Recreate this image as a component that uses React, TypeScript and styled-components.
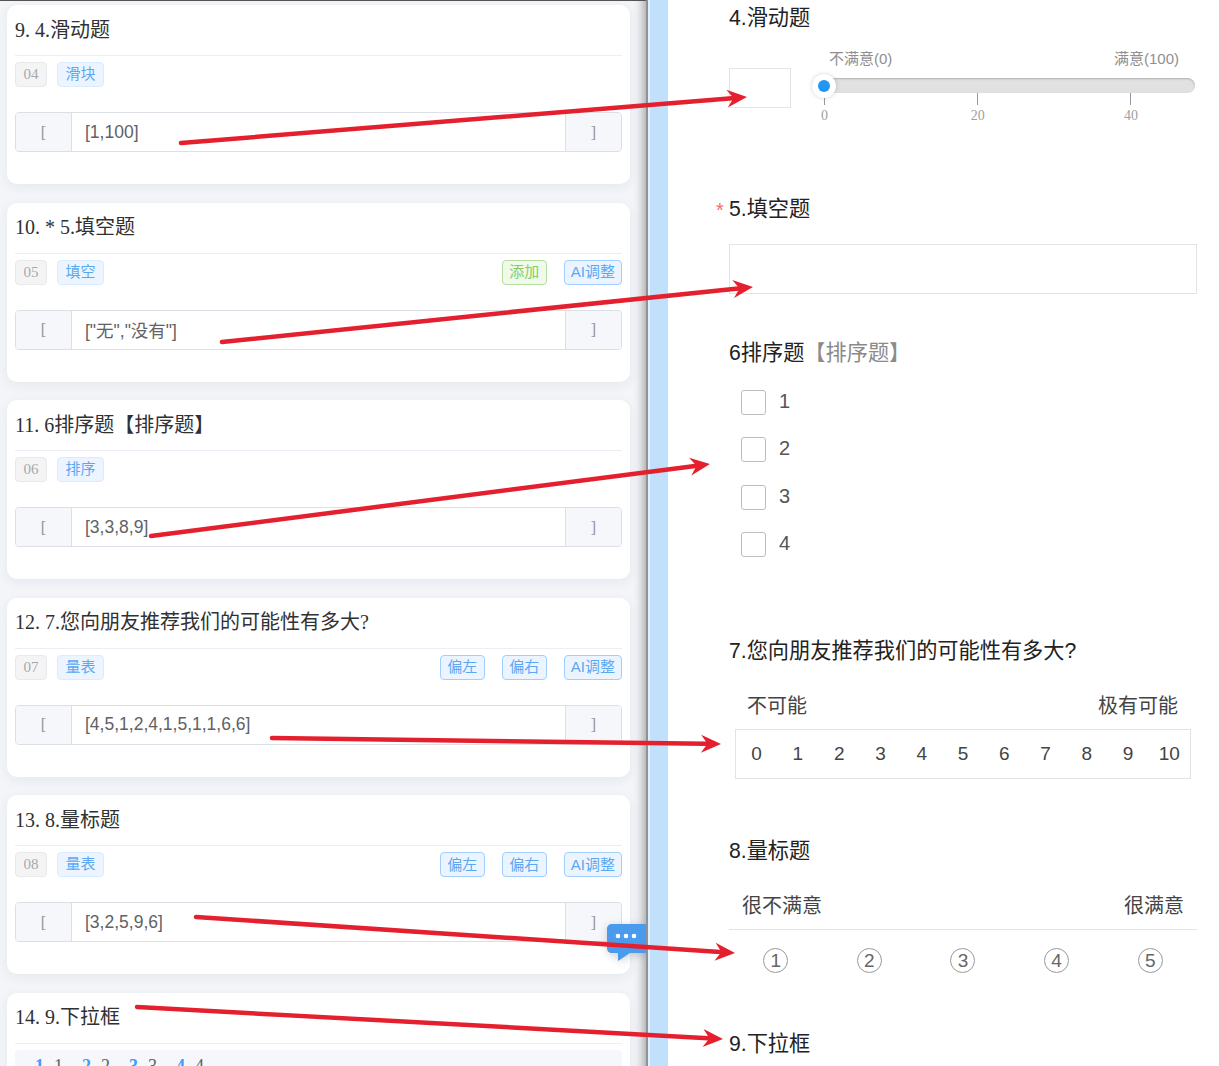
import React from 'react';
import styled, { createGlobalStyle } from 'styled-components';

const GlobalStyle = createGlobalStyle`
  html, body {
    margin: 0;
    padding: 0;
    background: #fff;
  }
  * {
    box-sizing: border-box;
  }
`;

const SERIF = `"Liberation Serif", "Noto Sans CJK SC", serif`;
const SANS = `"Liberation Sans", "Noto Sans CJK SC", sans-serif`;

const Page = styled.div`
  position: relative;
  display: flex;
  width: 1219px;
  height: 1066px;
  overflow: hidden;
`;

/* left editor column */
const EditorPane = styled.div`
  position: relative;
  flex: 0 0 646px;
  height: 100%;
  padding: 5px 16px 0 7px;
  background: #f3f5f8;
  border-top: 1px solid #555;
  overflow: hidden;
  box-shadow: inset -12px 0 10px -9px rgba(0, 0, 0, 0.32);
  font-family: ${SERIF};
`;
const Card = styled.div`
  height: 179px;
  margin-bottom: 18.5px;
  padding: 0 8px;
  background: #fff;
  border-radius: 10px;
  box-shadow: 0 3px 12px rgba(30, 50, 90, 0.07);
  &:first-child {
    margin-top: -1px;
  }
`;
const CardTitle = styled.div`
  height: 51px;
  padding-top: 9.7px;
  border-bottom: 1px solid #ebeef5;
  font-size: 20px;
  line-height: 30px;
  color: #303133;
`;
const TagRow = styled.div`
  display: flex;
  align-items: center;
  gap: 10px;
  height: 25px;
  margin-top: 6px;
`;
const ActionGroup = styled.div`
  display: flex;
  gap: 17px;
  margin-left: auto;
`;
const Tag = styled.span<{ $kind: 'plain' | 'soft' }>`
  display: inline-flex;
  align-items: center;
  justify-content: center;
  height: 25px;
  padding: 0 7.5px ${(p) => (p.$kind === 'plain' ? 0 : 4)}px;
  border-radius: 4px;
  border: 1px solid ${(p) => (p.$kind === 'plain' ? '#e9e9eb' : '#d9ecff')};
  background: ${(p) => (p.$kind === 'plain' ? '#f4f4f5' : '#ecf5ff')};
  color: ${(p) => (p.$kind === 'plain' ? '#a6a9ad' : '#5ba8f2')};
  font-size: 15px;
  white-space: nowrap;
`;
const ActionTag = styled.span<{ $green?: boolean }>`
  display: inline-flex;
  align-items: center;
  justify-content: center;
  min-width: 45px;
  height: 25px;
  padding: 0 6px 3px;
  border-radius: 4px;
  border: 1px solid ${(p) => (p.$green ? '#b3e19d' : '#a0cfff')};
  background: ${(p) => (p.$green ? '#f0f9eb' : '#ecf5ff')};
  color: ${(p) => (p.$green ? '#85ce61' : '#5ba8f2')};
  font-family: ${SANS};
  font-size: 15px;
  white-space: nowrap;
`;
const InputGroup = styled.div`
  display: flex;
  height: 40px;
  margin-top: 25px;
  border: 1px solid #dcdfe6;
  border-radius: 4px;
  overflow: hidden;
`;
const Bracket = styled.div`
  display: flex;
  align-items: center;
  justify-content: center;
  flex: 0 0 55px;
  padding-top: 1px;
  background: #f5f7fa;
  color: #909399;
  font-size: 16px;
`;
const ValueText = styled.div`
  flex: 1;
  display: flex;
  align-items: center;
  padding-left: 13px;
  border-left: 1px solid #dcdfe6;
  border-right: 1px solid #dcdfe6;
  font-family: ${SANS};
  font-size: 17.5px;
  color: #606266;
`;
const OptionStrip = styled.div`
  display: flex;
  gap: 12px;
  height: 40px;
  margin-top: 6px;
  padding: 4px 0 0 20px;
  background: #f5f7fa;
  border-radius: 4px;
  font-size: 18px;
  line-height: 24px;
`;
const OptionItem = styled.span`
  display: inline-flex;
  gap: 10px;
  width: 35px;
  color: #606266;
  b {
    color: #409eff;
  }
`;
const ChatBubble = styled.svg`
  position: absolute;
  right: 0;
  top: 923px;
  filter: drop-shadow(0 2px 4px rgba(0, 0, 0, 0.18));
`;

/* divider between the two columns */
const Divider = styled.div`
  flex: 0 0 22px;
  height: 100%;
  background: linear-gradient(to right, #8d9297 0, #8d9297 2px, #e4f1fd 2px, #e4f1fd 4px, #c1e0fb 4px);
`;

/* right preview column */
const PreviewPane = styled.div`
  flex: 0 0 551px;
  min-width: 0;
  padding: 3px 22px 0 61px;
  background: #fff;
  font-family: ${SANS};
`;
const Question = styled.div<{ $height?: number }>`
  height: ${(p) => (p.$height ? `${p.$height}px` : 'auto')};
`;
const QuestionTitle = styled.div`
  position: relative;
  height: 28px;
  font-size: 21.2px;
  line-height: 30px;
  color: #222;
`;
const RequiredMark = styled.span`
  position: absolute;
  left: -13px;
  top: 1px;
  color: #f56c6c;
  font-size: 20px;
`;
const TitleNote = styled.span`
  color: #8a8a8a;
`;
const SliderRow = styled.div`
  display: flex;
  align-items: flex-start;
`;
const SliderValue = styled.div`
  flex: 0 0 62px;
  height: 40px;
  margin-top: 37px;
  border: 1px solid #e3e3e3;
`;
const SliderArea = styled.div`
  flex: 1;
  min-width: 0;
  margin: 18px 2px 0 21px;
`;
const SliderLabels = styled.div`
  display: flex;
  justify-content: space-between;
  height: 20px;
  padding: 0 16px 0 17px;
  font-size: 15px;
  line-height: 20px;
  color: #8f8f8f;
`;
const SliderTrack = styled.div`
  position: relative;
  height: 15px;
  margin-top: 9px;
  border-radius: 8px;
  background: #e1e1e1;
  box-shadow: inset 0 1px 2px rgba(0, 0, 0, 0.22);
`;
const SliderHandle = styled.div`
  position: absolute;
  left: 0;
  top: -4.5px;
  width: 24px;
  height: 24px;
  border-radius: 50%;
  background: #fff;
  box-shadow: 0 0 4px rgba(0, 0, 0, 0.18);
  &::after {
    content: '';
    position: absolute;
    left: 6px;
    top: 6px;
    width: 12px;
    height: 12px;
    border-radius: 50%;
    background: #2196f3;
  }
`;
const SliderScale = styled.div`
  display: flex;
  gap: 152.2px;
  padding-left: 12px;
`;
const SliderTick = styled.div`
  display: flex;
  flex-direction: column;
  align-items: center;
  flex: 0 0 1px;
  width: 1px;
  min-width: 0;
  font-family: ${SERIF};
  font-size: 14px;
  line-height: 16px;
  color: #a0a0a0;
  &::before {
    content: '';
    flex: 0 0 12px;
    width: 1px;
    margin-bottom: 3px;
    background: #999;
  }
`;
const TextBox = styled.div`
  height: 50px;
  margin-top: 22px;
  border: 1px solid #e3e3e3;
`;
const SortList = styled.div`
  display: flex;
  flex-direction: column;
  gap: 22.4px;
  margin-top: 24px;
  padding-left: 12px;
`;
const SortRow = styled.div`
  display: flex;
  align-items: center;
  gap: 13px;
  height: 25px;
  padding-bottom: 2px;
  font-size: 20px;
  color: #555;
`;
const CheckBox = styled.span`
  flex: 0 0 25px;
  height: 25px;
  margin-bottom: -2px;
  border: 1px solid #bdbdbd;
  border-radius: 3px;
  background: #fff;
`;
const ScaleLabels = styled.div<{ $left: number; $right: number; $ruled?: boolean }>`
  display: flex;
  justify-content: space-between;
  height: ${(p) => (p.$ruled ? 38 : 27)}px;
  margin-top: 28px;
  padding: 0 ${(p) => p.$right}px 0 ${(p) => p.$left}px;
  font-size: 20px;
  line-height: 28px;
  color: #444;
  border-bottom: ${(p) => (p.$ruled ? '1px solid #e3e3e3' : 'none')};
`;
const NpsBox = styled.div`
  display: grid;
  grid-template-columns: repeat(11, 1fr);
  align-items: center;
  height: 50px;
  margin: 10px 6px 0;
  border: 1px solid #e3e3e3;
  font-size: 19px;
  color: #444;
  text-align: center;
`;
const RatingRow = styled.div`
  display: grid;
  grid-template-columns: repeat(5, 1fr);
  justify-items: center;
  margin-top: 18px;
`;
const RatingCircle = styled.span`
  display: flex;
  align-items: center;
  justify-content: center;
  width: 25px;
  height: 25px;
  border: 1px solid #999;
  border-radius: 50%;
  font-size: 19px;
  color: #666;
`;

/* red annotation arrows drawn over the whole screenshot */
const ArrowLayer = styled.svg`
  position: absolute;
  left: 0;
  top: 0;
  pointer-events: none;
`;

type CardInfo = {
  title: string;
  code: string;
  type: string;
  actions: string[];
  value: string;
};

const CARDS: CardInfo[] = [
  { title: '9. 4.滑动题', code: '04', type: '滑块', actions: [], value: '[1,100]' },
  { title: '10. * 5.填空题', code: '05', type: '填空', actions: ['添加', 'AI调整'], value: '["无","没有"]' },
  { title: '11. 6排序题【排序题】', code: '06', type: '排序', actions: [], value: '[3,3,8,9]' },
  { title: '12. 7.您向朋友推荐我们的可能性有多大?', code: '07', type: '量表', actions: ['偏左', '偏右', 'AI调整'], value: '[4,5,1,2,4,1,5,1,1,6,6]' },
  { title: '13. 8.量标题', code: '08', type: '量表', actions: ['偏左', '偏右', 'AI调整'], value: '[3,2,5,9,6]' },
];

const ARROWS = [
  [181, 143, 747, 97],
  [222, 342, 753, 287],
  [151, 536, 710, 464],
  [272, 738, 721, 744],
  [196, 917, 735, 953],
  [137, 1007, 723, 1039],
];

const arrowHead = (x1: number, y1: number, x2: number, y2: number) => {
  const a = Math.atan2(y2 - y1, x2 - x1);
  const at = (back: number, side: number) => {
    const x = x2 - back * Math.cos(a) - side * Math.sin(a);
    const y = y2 - back * Math.sin(a) + side * Math.cos(a);
    return `${x},${y}`;
  };
  return [at(0, 0), at(20, 9), at(15, 2), at(15, -2), at(20, -9)].join(' ');
};

export default function App() {
  return (
    <Page>
      <GlobalStyle />
      <EditorPane>
        {CARDS.map((card) => (
          <Card key={card.code}>
            <CardTitle>{card.title}</CardTitle>
            <TagRow>
              <Tag $kind="plain">{card.code}</Tag>
              <Tag $kind="soft">{card.type}</Tag>
              {card.actions.length > 0 && (
                <ActionGroup>
                  {card.actions.map((action) => (
                    <ActionTag key={action} $green={action === '添加'}>
                      {action}
                    </ActionTag>
                  ))}
                </ActionGroup>
              )}
            </TagRow>
            <InputGroup>
              <Bracket>[</Bracket>
              <ValueText>{card.value}</ValueText>
              <Bracket>]</Bracket>
            </InputGroup>
          </Card>
        ))}
        <Card>
          <CardTitle>14. 9.下拉框</CardTitle>
          <OptionStrip>
            {[1, 2, 3, 4].map((n) => (
              <OptionItem key={n}>
                <b>{n}</b>
                {n}
              </OptionItem>
            ))}
          </OptionStrip>
        </Card>
        <ChatBubble width="39" height="38" viewBox="0 0 39 38">
          <path
            d="M5 0H39V29H23L11 37V29H5C2 29 0 27 0 24V5C0 2 2 0 5 0Z"
            fill="#4a9bec"
          />
          <circle cx="11" cy="12" r="2.3" fill="#fff" />
          <circle cx="19" cy="12" r="2.3" fill="#fff" />
          <circle cx="27" cy="12" r="2.3" fill="#fff" />
        </ChatBubble>
      </EditorPane>
      <Divider />
      <PreviewPane>
        <Question $height={191}>
          <QuestionTitle>4.滑动题</QuestionTitle>
          <SliderRow>
            <SliderValue />
            <SliderArea>
              <SliderLabels>
                <span>不满意(0)</span>
                <span>满意(100)</span>
              </SliderLabels>
              <SliderTrack>
                <SliderHandle />
              </SliderTrack>
              <SliderScale>
                <SliderTick>0</SliderTick>
                <SliderTick>20</SliderTick>
                <SliderTick>40</SliderTick>
              </SliderScale>
            </SliderArea>
          </SliderRow>
        </Question>
        <Question $height={144}>
          <QuestionTitle>
            <RequiredMark>*</RequiredMark>5.填空题
          </QuestionTitle>
          <TextBox />
        </Question>
        <Question $height={298}>
          <QuestionTitle>
            6排序题<TitleNote>【排序题】</TitleNote>
          </QuestionTitle>
          <SortList>
            {[1, 2, 3, 4].map((n) => (
              <SortRow key={n}>
                <CheckBox />
                {n}
              </SortRow>
            ))}
          </SortList>
        </Question>
        <Question $height={200}>
          <QuestionTitle>7.您向朋友推荐我们的可能性有多大?</QuestionTitle>
          <ScaleLabels $left={18} $right={19}>
            <span>不可能</span>
            <span>极有可能</span>
          </ScaleLabels>
          <NpsBox>
            {Array.from({ length: 11 }, (_, i) => (
              <span key={i}>{i}</span>
            ))}
          </NpsBox>
        </Question>
        <Question $height={193}>
          <QuestionTitle>8.量标题</QuestionTitle>
          <ScaleLabels $left={13} $right={13} $ruled>
            <span>很不满意</span>
            <span>很满意</span>
          </ScaleLabels>
          <RatingRow>
            {[1, 2, 3, 4, 5].map((n) => (
              <RatingCircle key={n}>{n}</RatingCircle>
            ))}
          </RatingRow>
        </Question>
        <Question>
          <QuestionTitle>9.下拉框</QuestionTitle>
        </Question>
      </PreviewPane>
      <ArrowLayer width="1219" height="1066" viewBox="0 0 1219 1066">
        {ARROWS.map(([x1, y1, x2, y2]) => {
          const a = Math.atan2(y2 - y1, x2 - x1);
          return (
            <g key={x1} fill="#e5202e" stroke="none">
              <line
                x1={x1}
                y1={y1}
                x2={x2 - 15 * Math.cos(a)}
                y2={y2 - 15 * Math.sin(a)}
                stroke="#e5202e"
                strokeWidth="4.5"
                strokeLinecap="round"
              />
              <polygon points={arrowHead(x1, y1, x2, y2)} />
            </g>
          );
        })}
      </ArrowLayer>
    </Page>
  );
}
